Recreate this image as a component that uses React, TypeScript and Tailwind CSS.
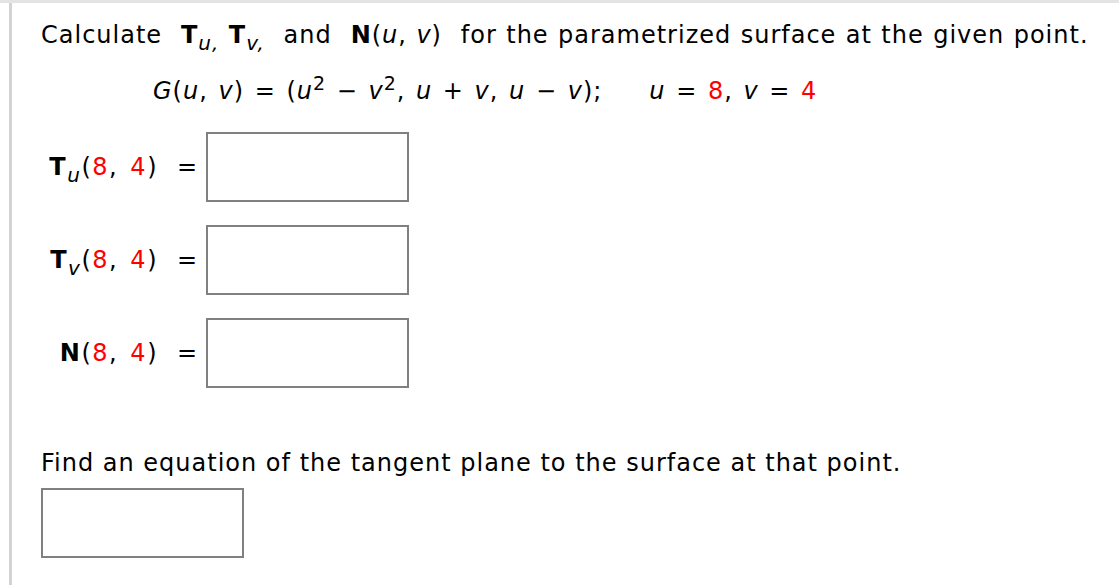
import React from "react";

const red = "text-[#ff0000]";

function Sub({ children }: { children: React.ReactNode }) {
  return <span className="relative top-[7px] text-[20px] italic leading-none">{children}</span>;
}

function Sup({ children }: { children: React.ReactNode }) {
  return <span className="relative -top-[9px] text-[19px] leading-none">{children}</span>;
}

function Box({ className = "" }: { className?: string }) {
  return <div className={`h-[70px] w-[203px] shrink-0 border-2 border-[#808080] bg-white ${className}`} />;
}

function Row({ label }: { label: React.ReactNode }) {
  return (
    <div className="flex h-[70px] items-center">
      <div className="w-[117px] whitespace-nowrap text-right tracking-[1.5px] [word-spacing:3px]">{label}</div>
      <div className="ml-[19px] w-[29px]">=</div>
      <Box />
    </div>
  );
}

export default function App() {
  return (
    <div
      className="h-[585px] w-full overflow-hidden border-t-[3px] border-[#e4e4e4] bg-white text-[24px] leading-[30px] tracking-[1px] text-black"
      style={{ fontFamily: '"DejaVu Sans", Verdana, sans-serif' }}
    >
      <div className="ml-[9px] h-full border-l-[3px] border-[#d3d3d3] pl-[29px] pt-[17px]">
        <p className="h-[30px] whitespace-nowrap [word-spacing:0.8px]">
          Calculate&nbsp; <b>T</b>
          <Sub>u,</Sub> <b>T</b>
          <Sub>v,</Sub>&nbsp; and&nbsp; <b>N</b>(<i>u</i>, <i>v</i>)&nbsp; for the parametrized surface at the given point.
        </p>
        <p className="mt-[26px] h-[30px] whitespace-nowrap pl-[112px] [word-spacing:2px]">
          <i>G</i>(<i>u</i>, <i>v</i>) = (<i>u</i>
          <Sup>2</Sup> − <i>v</i>
          <Sup>2</Sup>, <i>u</i> + <i>v</i>, <i>u</i> − <i>v</i>);
          <span className="ml-[47px]">
            <i>u</i> = <span className={red}>8</span>, <i>v</i> = <span className={red}>4</span>
          </span>
        </p>
        <div className="mt-[26px] flex flex-col gap-[23px]">
          <Row
            label={
              <>
                <b>T</b>
                <Sub>u</Sub>(<span className={red}>8</span>, <span className={red}>4</span>)
              </>
            }
          />
          <Row
            label={
              <>
                <b>T</b>
                <Sub>v</Sub>(<span className={red}>8</span>, <span className={red}>4</span>)
              </>
            }
          />
          <Row
            label={
              <>
                <b>N</b>(<span className={red}>8</span>, <span className={red}>4</span>)
              </>
            }
          />
        </div>
        <p className="mt-[60px] h-[30px] whitespace-nowrap">Find an equation of the tangent plane to the surface at that point.</p>
        <Box className="mt-[10px]" />
      </div>
    </div>
  );
}
